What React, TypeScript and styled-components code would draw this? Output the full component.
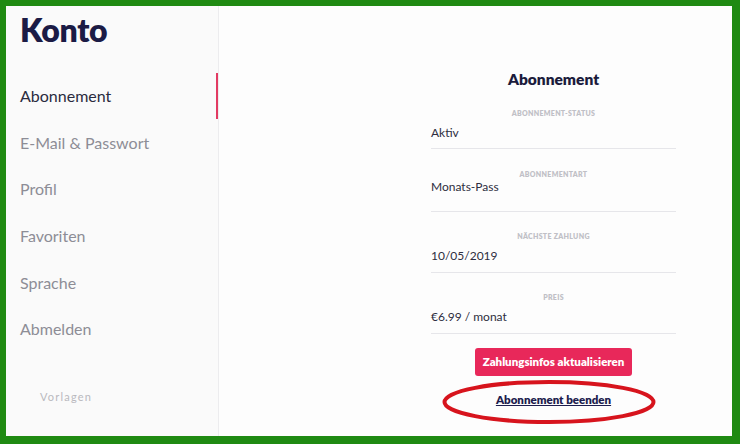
import React from "react";
import styled, { createGlobalStyle } from "styled-components";

const Global = createGlobalStyle`
  html, body { margin: 0; padding: 0; }
  body { font-family: "Lato", "Liberation Sans", sans-serif; }
  * { box-sizing: border-box; }
`;

const Frame = styled.div`
  width: 740px;
  height: 444px;
  border-style: solid;
  border-color: #1f8a12;
  border-width: 6px 8px 8px 6px;
  display: flex;
  overflow: hidden;
  background: #fdfdfd;
`;

const Sidebar = styled.nav`
  width: 213px;
  flex: none;
  background: #fafafa;
  border-right: 1px solid #ececee;
  display: flex;
  flex-direction: column;
`;

const Brand = styled.h1`
  margin: 0;
  height: 66.5px;
  padding: 5px 0 0 14px;
  font-size: 32px;
  line-height: 38px;
  font-weight: 800;
  color: #1b1b45;
  letter-spacing: -0.3px;
`;

const NavItem = styled.div<{ $active?: boolean }>`
  height: 46.6px;
  display: flex;
  align-items: center;
  padding-left: 14px;
  font-size: 16px;
  color: ${(p) => (p.$active ? "#2a2a3e" : "#8d8d96")};
  box-shadow: ${(p) => (p.$active ? "inset -2px 0 0 #e23a62" : "none")};
`;

const Footer = styled.div`
  margin-top: 38px;
  padding-left: 34px;
  font-size: 11px;
  letter-spacing: 1.2px;
  color: #b9b9be;
`;

const Main = styled.main`
  flex: 1;
  padding: 64px 0 0 212px;
`;

const Column = styled.section`
  width: 245px;
  display: flex;
  flex-direction: column;
`;

const Title = styled.h2`
  margin: 0;
  text-align: center;
  font-size: 15.5px;
  line-height: 18px;
  font-weight: 800;
  color: #1b1b3c;
`;

const Field = styled.div<{ $tight?: boolean }>`
  padding: 19.5px 0 ${(p) => (p.$tight ? "15.6px" : "7.7px")};
  border-bottom: 1px solid #e6e6ea;
  display: flex;
  flex-direction: column;
`;

const Label = styled.div`
  text-align: center;
  font-size: 7px;
  line-height: 10px;
  font-weight: 800;
  letter-spacing: 0.3px;
  color: #c0c0c6;
  text-transform: uppercase;
`;

const Value = styled.div<{ $tight?: boolean }>`
  margin-top: ${(p) => (p.$tight ? "0.3px" : "7px")};
  font-size: 12px;
  line-height: 16px;
  color: #2d2d40;
`;

const Actions = styled.div`
  display: flex;
  flex-direction: column;
  align-items: center;
  padding-top: 14px;
`;

const Button = styled.button`
  height: 28px;
  padding: 0 8px;
  border: none;
  border-radius: 3px;
  background: #e8285a;
  color: #ffffff;
  font-family: inherit;
  font-size: 11.5px;
  font-weight: 800;
`;

const LinkWrap = styled.div`
  position: relative;
  margin-top: 15px;
  line-height: 14px;
`;

const CancelLink = styled.a`
  font-size: 11.5px;
  font-weight: 800;
  color: #1d1d4e;
  text-decoration: underline;
`;

const Annotation = styled.svg`
  position: absolute;
  left: -55.5px;
  top: -13px;
  width: 218px;
  height: 48px;
  pointer-events: none;
`;

const nav = ["Abonnement", "E-Mail & Passwort", "Profil", "Favoriten", "Sprache", "Abmelden"];

const fields = [
  { label: "Abonnement-Status", value: "Aktiv" },
  { label: "Abonnementart", value: "Monats-Pass", tight: true },
  { label: "Nächste Zahlung", value: "10/05/2019" },
  { label: "Preis", value: "€6.99 / monat" },
];

export default function App() {
  return (
    <>
      <Global />
      <Frame>
        <Sidebar>
          <Brand>Konto</Brand>
          {nav.map((n, i) => (
            <NavItem key={n} $active={i === 0}>
              {n}
            </NavItem>
          ))}
          <Footer>Vorlagen</Footer>
        </Sidebar>
        <Main>
          <Column>
            <Title>Abonnement</Title>
            {fields.map((f) => (
              <Field key={f.label} $tight={f.tight}>
                <Label>{f.label}</Label>
                <Value $tight={f.tight}>{f.value}</Value>
              </Field>
            ))}
            <Actions>
              <Button>Zahlungsinfos aktualisieren</Button>
              <LinkWrap>
                <CancelLink>Abonnement beenden</CancelLink>
                <Annotation viewBox="0 0 218 48">
                  <ellipse cx="109" cy="24" rx="104.5" ry="20" fill="none" stroke="#d7141d" strokeWidth="4" />
                </Annotation>
              </LinkWrap>
            </Actions>
          </Column>
        </Main>
      </Frame>
    </>
  );
}
